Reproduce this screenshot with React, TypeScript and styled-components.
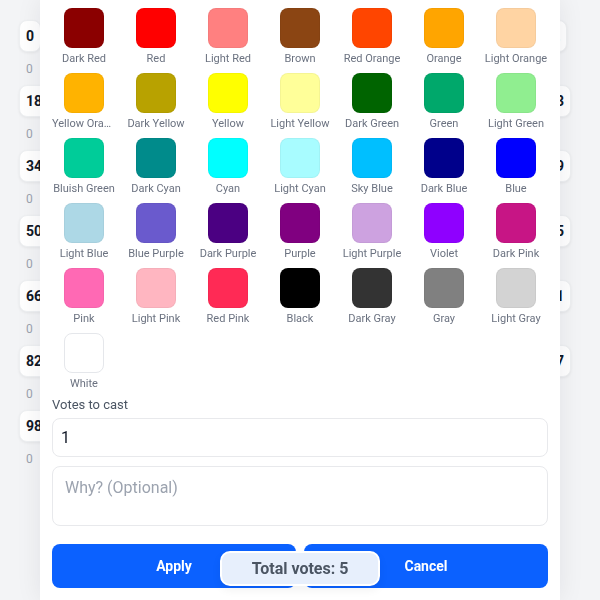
import styled, { createGlobalStyle } from 'styled-components';

const GlobalStyle = createGlobalStyle`
  html, body {
    margin: 0;
    padding: 0;
    background: #f3f4f6;
    font-family: Roboto, 'Liberation Sans', sans-serif;
  }
  * { box-sizing: border-box; }
`;

const Page = styled.div`
  min-height: 100vh;
  background: #f3f4f6;
`;

const Board = styled.div`
  display: flex;
  justify-content: space-between;
  padding: 20px 24px 0 19px;
`;

const Column = styled.div<{ align: 'start' | 'center' }>`
  display: flex;
  flex-direction: column;
  width: 40px;
  align-items: ${props => props.align === 'start' ? 'flex-start' : 'center'};
`;

const Slot = styled.div<{ align: 'start' | 'center' }>`
  display: flex;
  flex-direction: column;
  align-items: ${props => props.align === 'start' ? 'flex-start' : 'center'};
`;

const Tile = styled.div`
  height: 32px;
  padding: 0 6px;
  display: flex;
  align-items: center;
  background: #fff;
  border-radius: 8px;
  box-shadow: 0 1px 3px rgba(0, 0, 0, 0.06);
  border: 1px solid #eef0f2;
  font-size: 14px;
  font-weight: 700;
  color: #111827;
`;

const Count = styled.div<{ align: 'start' | 'center' }>`
  margin: 10px 0 9px;
  padding-left: ${props => props.align === 'start' ? '7px' : '0'};
  font-size: 12px;
  line-height: 14px;
  color: #9ca3af;
`;

const Overlay = styled.div`
  position: fixed;
  inset: 0;
  display: flex;
  justify-content: center;
`;

const Modal = styled.div`
  width: 520px;
  height: 100%;
  background: #fff;
  box-shadow: 0 0 24px rgba(15, 23, 42, 0.08);
  padding: 8px 12px 12px;
  display: flex;
  flex-direction: column;
`;

const Palette = styled.div`
  display: grid;
  grid-template-columns: repeat(7, 64px);
  column-gap: 8px;
  row-gap: 7px;
`;

const ColorItem = styled.div`
  display: flex;
  flex-direction: column;
  align-items: center;
`;

const Swatch = styled.div<{ color: string }>`
  width: 40px;
  height: 40px;
  border-radius: 8px;
  background: ${props => props.color};
  border: 1px solid ${props => props.color === '#ffffff' ? '#e5e7eb' : 'rgba(0,0,0,0.04)'};
`;

const ColorName = styled.div`
  width: 100%;
  margin-top: 4px;
  font-size: 11px;
  line-height: 14px;
  color: #6b7280;
  text-align: center;
  white-space: nowrap;
  overflow: hidden;
  text-overflow: ellipsis;
`;

const FieldLabel = styled.div`
  margin-top: 5px;
  font-size: 13px;
  line-height: 18px;
  color: #4b5563;
`;

const TextInput = styled.input`
  margin-top: 4px;
  height: 39px;
  width: 100%;
  border: 1px solid #e8e9ec;
  border-radius: 8px;
  padding: 0 8px;
  font-family: Roboto, 'Liberation Sans', sans-serif;
  font-size: 16px;
  color: #111827;
  outline: none;
`;

const Reason = styled.textarea`
  margin-top: 9px;
  height: 60px;
  width: 100%;
  border: 1px solid #e8e9ec;
  border-radius: 8px;
  padding: 10px 12px;
  font-family: Roboto, 'Liberation Sans', sans-serif;
  font-size: 16px;
  line-height: 22px;
  resize: none;
  outline: none;
  &::placeholder { color: #9ca3af; }
`;

const Actions = styled.div`
  margin-top: 18px;
  display: grid;
  grid-template-columns: 1fr 1fr;
  gap: 8px;
`;

const ActionButton = styled.button`
  height: 44px;
  border: none;
  border-radius: 8px;
  background: #0b61ff;
  color: #fff;
  font-family: Roboto, 'Liberation Sans', sans-serif;
  font-size: 14px;
  font-weight: 700;
`;

const TotalPill = styled.div`
  position: fixed;
  left: 50%;
  bottom: 14px;
  transform: translateX(-50%);
  width: 160px;
  height: 35px;
  display: flex;
  align-items: center;
  justify-content: center;
  background: #e7effc;
  border: 2px solid #fff;
  border-radius: 10px;
  box-shadow: 0 4px 10px rgba(0, 0, 0, 0.06);
  font-size: 16px;
  font-weight: 700;
  color: #4b5563;
`;

const colors: [string, string][] = [
  ['Dark Red', '#8b0000'], ['Red', '#ff0000'], ['Light Red', '#ff8080'], ['Brown', '#8b4513'],
  ['Red Orange', '#ff4500'], ['Orange', '#ffa500'], ['Light Orange', '#ffd4a3'],
  ['Yellow Orange', '#ffb300'], ['Dark Yellow', '#b8a200'], ['Yellow', '#ffff00'], ['Light Yellow', '#ffff99'],
  ['Dark Green', '#006400'], ['Green', '#00a86b'], ['Light Green', '#90ee90'],
  ['Bluish Green', '#00cc99'], ['Dark Cyan', '#008b8b'], ['Cyan', '#00ffff'], ['Light Cyan', '#a8fcff'],
  ['Sky Blue', '#00bfff'], ['Dark Blue', '#00008b'], ['Blue', '#0000ff'],
  ['Light Blue', '#add8e6'], ['Blue Purple', '#6a5acd'], ['Dark Purple', '#4b0082'], ['Purple', '#800080'],
  ['Light Purple', '#cda2e0'], ['Violet', '#8f00ff'], ['Dark Pink', '#c71585'],
  ['Pink', '#ff69b4'], ['Light Pink', '#ffb6c1'], ['Red Pink', '#ff2a55'], ['Black', '#000000'],
  ['Dark Gray', '#333333'], ['Gray', '#808080'], ['Light Gray', '#d3d3d3'],
  ['White', '#ffffff'],
];

const leftTiles = ['0', '18', '34', '50', '66', '82', '98'];
const rightTiles = ['2', '33', '49', '65', '81', '97'];

const App = () => {
  return (
    <Page>
      <GlobalStyle />
      <Board>
        <Column align="start">
          {leftTiles.map(n => (
            <Slot align="start" key={n}>
              <Tile>{n}</Tile>
              <Count align="start">0</Count>
            </Slot>
          ))}
        </Column>
        <Column align="center">
          {rightTiles.map(n => (
            <Slot align="center" key={n}>
              <Tile>{n}</Tile>
              <Count align="center">0</Count>
            </Slot>
          ))}
        </Column>
      </Board>

      <Overlay>
        <Modal>
          <Palette>
            {colors.map(([name, hex]) => (
              <ColorItem key={name}>
                <Swatch color={hex} />
                <ColorName>{name}</ColorName>
              </ColorItem>
            ))}
          </Palette>
          <FieldLabel>Votes to cast</FieldLabel>
          <TextInput defaultValue="1" />
          <Reason placeholder="Why? (Optional)" />
          <Actions>
            <ActionButton>Apply</ActionButton>
            <ActionButton>Cancel</ActionButton>
          </Actions>
        </Modal>
      </Overlay>

      <TotalPill>Total votes: 5</TotalPill>
    </Page>
  );
};

export default App;
